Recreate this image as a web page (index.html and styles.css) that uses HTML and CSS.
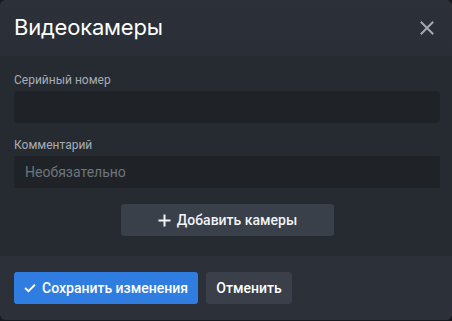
FILE: index.html
```html
<!DOCTYPE html>
<html lang="ru">
<head>
<meta charset="utf-8">
<title>Видеокамеры</title>
<link rel="stylesheet" href="styles.css">
</head>
<body>
<div class="modal">
  <header class="modal-header">
    <h1 class="modal-title">Видеокамеры</h1>
    <button class="close" aria-label="Закрыть">
      <svg width="14" height="14" viewBox="0 0 14 14"><path d="M1.5 1.5 L12.5 12.5 M12.5 1.5 L1.5 12.5" stroke="currentColor" stroke-width="2" stroke-linecap="square"/></svg>
    </button>
  </header>
  <main class="modal-body">
    <label class="field">
      <span class="field-label">Серийный номер</span>
      <span class="input"></span>
    </label>
    <label class="field">
      <span class="field-label">Комментарий</span>
      <span class="input input-flat"><span class="placeholder">Необязательно</span></span>
    </label>
    <div class="add-row">
      <button class="btn btn-add">
        <svg width="13" height="13" viewBox="0 0 13 13"><path d="M6.5 0.5 V12.5 M0.5 6.5 H12.5" stroke="currentColor" stroke-width="2"/></svg>
        <span>Добавить камеры</span>
      </button>
    </div>
  </main>
  <footer class="modal-footer">
    <button class="btn btn-primary">
      <svg width="13" height="10" viewBox="0 0 13 10"><path d="M1.2 5 L4.8 8.5 L11.8 1.5" fill="none" stroke="currentColor" stroke-width="2"/></svg>
      <span>Сохранить изменения</span>
    </button>
    <button class="btn btn-secondary">Отменить</button>
  </footer>
</div>
</body>
</html>
```
FILE: styles.css
```css
* { box-sizing: border-box; }
html, body { margin: 0; padding: 0; }
body {
  background: #16191d;
  font-family: Roboto, "Noto Sans", sans-serif;
  width: 452px;
  height: 321px;
  overflow: hidden;
}
.modal {
  width: 452px;
  height: 320px;
  border-radius: 6px;
  overflow: hidden;
  background: #262b32;
  display: flex;
  flex-direction: column;
}
.modal-header {
  height: 56px;
  display: flex;
  align-items: center;
  justify-content: space-between;
  padding: 0 18px 0 14px;
  background: linear-gradient(#2c3139, #2a2f37);
}
.modal-title {
  margin: 0;
  font-family: Inter, Roboto, sans-serif;
  font-size: 22px;
  font-weight: 400;
  color: #ffffff;
  letter-spacing: -0.2px;
  padding-bottom: 2px;
}
.close {
  background: none;
  border: 0;
  padding: 0;
  color: #a3a9b1;
  display: flex;
  width: 14px;
  height: 14px;
}
.modal-body {
  flex: 1;
  padding: 17px 12px 0 14px;
  display: flex;
  flex-direction: column;
}
.field {
  display: flex;
  flex-direction: column;
  gap: 3px;
  margin-bottom: 15px;
}
.field-label {
  font-size: 12px;
  line-height: 15px;
  color: #a7adb5;
}
.input {
  height: 32px;
  background: #1f2327;
  border-radius: 4px;
  display: flex;
  align-items: center;
  padding: 0 11px;
}
.input-flat { border-radius: 0; }
.placeholder {
  font-size: 14px;
  color: #6f757c;
}
.add-row {
  display: flex;
  justify-content: center;
  padding-left: 1px;
  margin-top: 1px;
}
.btn {
  border: 0;
  border-radius: 3px;
  height: 32px;
  font-family: Roboto, "Noto Sans", sans-serif;
  font-size: 14px;
  font-weight: 500;
  color: #ffffff;
  white-space: nowrap;
  display: inline-flex;
  align-items: center;
  justify-content: center;
  gap: 6px;
  padding: 0 10px;
}
.btn-add {
  width: 213px;
  background: #3a404a;
  color: #f2f3f5;
}
.modal-footer {
  height: 64px;
  background: #2c3139;
  display: flex;
  align-items: center;
  gap: 8px;
  padding: 0 14px;
}
.btn-primary {
  width: 184px;
  background: #2f7de1;
}
.btn-secondary {
  width: 86px;
  background: #3a3f49;
}
```
